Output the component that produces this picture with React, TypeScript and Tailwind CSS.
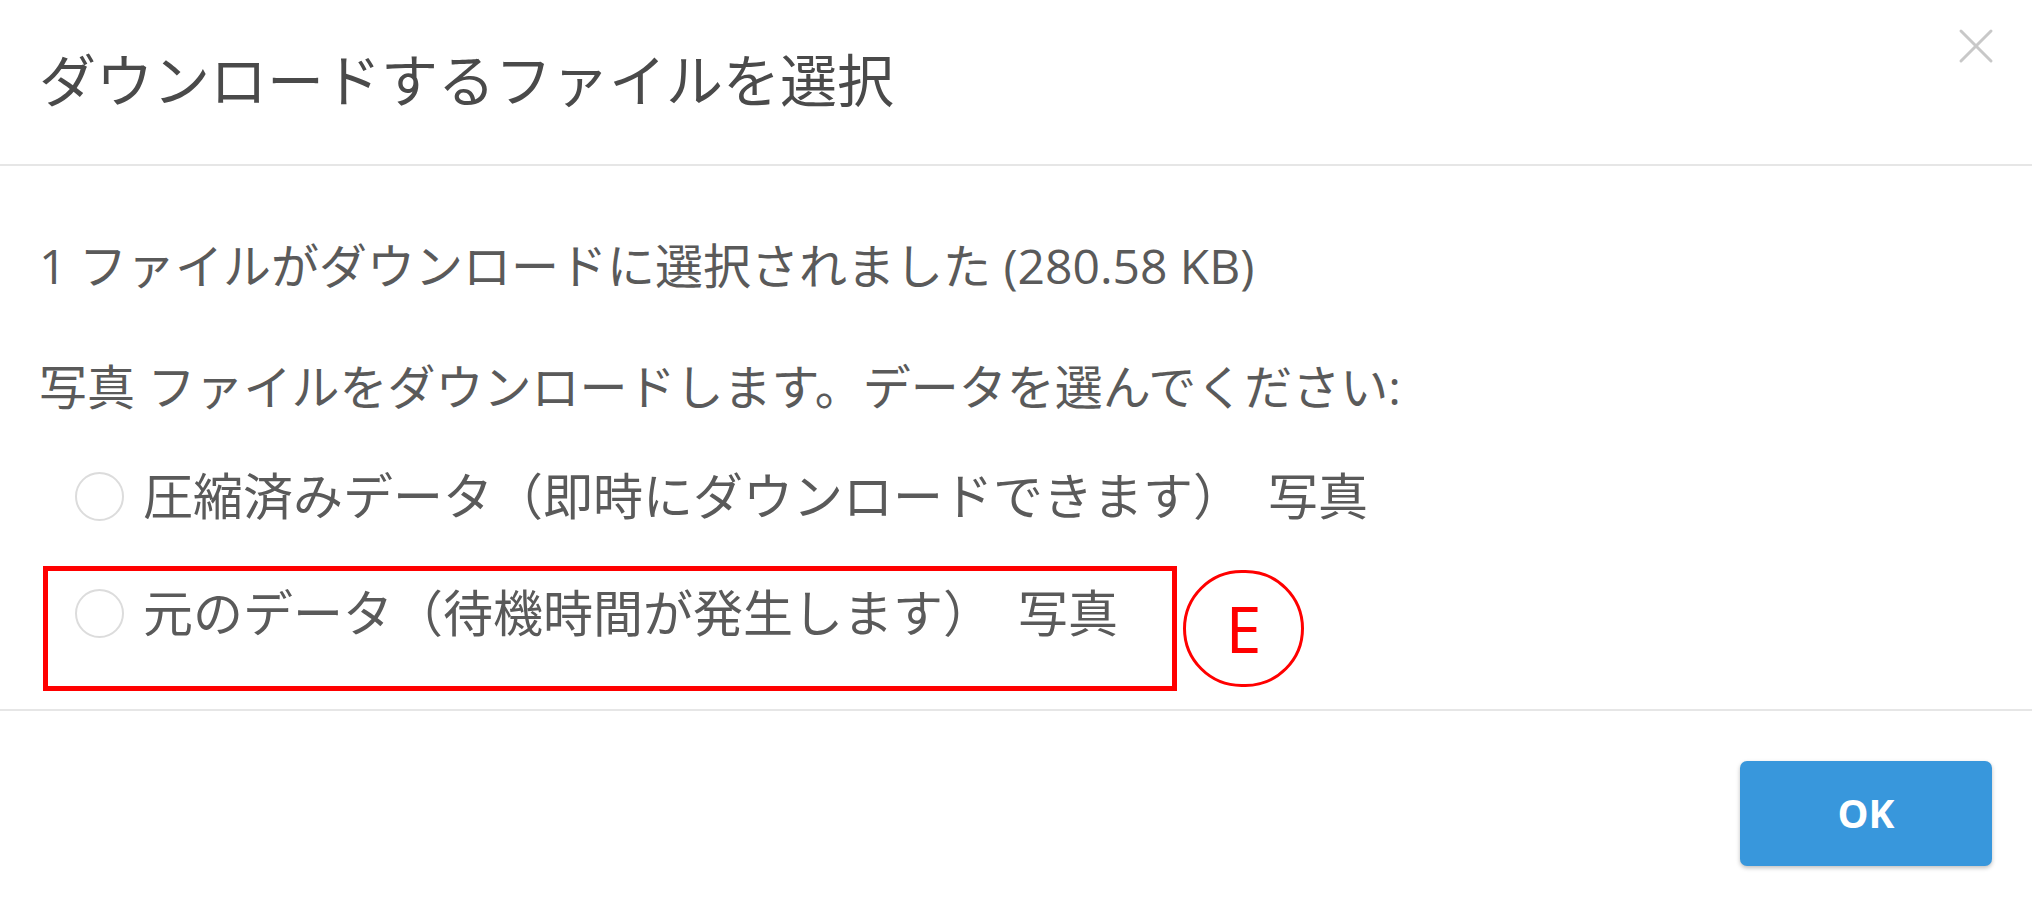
import { X } from "lucide-react"

const font = { fontFamily: '"Open Sans", "Noto Sans CJK JP", sans-serif' }

function Radio({ label }: { label: string }) {
  return (
    <label className="flex items-center h-[68px] pl-[36px] gap-[19px] text-[50px] cursor-pointer">
      <span className="w-[49px] h-[49px] rounded-full border-2 border-[#dcdcdc] bg-white shrink-0" />
      <span>{label}</span>
    </label>
  )
}

export default function App() {
  return (
    <div
      className="relative w-full h-[907px] bg-white text-[#5a5a5a] overflow-hidden"
      style={font}
    >
      {/* Header */}
      <div className="flex items-start justify-between h-[166px] border-b-2 border-[#e6e6e6]">
        <h2 className="mt-[46px] pl-[39px] text-[57px] leading-[68px] font-normal text-[#4a4a4a]">
          ダウンロードするファイルを選択
        </h2>
        <button className="mt-[16px] mr-[26px] text-[#c8c8c8]">
          <X className="w-[60px] h-[60px]" strokeWidth={1.2} />
        </button>
      </div>

      {/* Body */}
      <div className="px-[39px] pt-[66px] pb-[62px] text-[48px] leading-[68px]">
        <p>1 ファイルがダウンロードに選択されました (280.58 KB)</p>
        <p className="mt-[53px]">写真 ファイルをダウンロードします。データを選んでください:</p>
        <div className="mt-[41px]">
          <Radio label="圧縮済みデータ（即時にダウンロードできます）　写真" />
        </div>
        <div className="mt-[49px]">
          <Radio label="元のデータ（待機時間が発生します）　写真" />
        </div>
      </div>

      {/* Footer */}
      <div className="flex justify-end border-t-2 border-[#e6e6e6] pt-[50px] pr-[40px] pb-[39px]">
        <button className="w-[252px] h-[105px] rounded-[7px] bg-[#3897dc] text-white text-[39px] font-bold shadow-[0_2px_4px_rgba(0,0,0,0.25)]">
          OK
        </button>
      </div>

      {/* Annotation overlays */}
      <div className="absolute left-[43px] top-[566px] w-[1134px] h-[125px] border-[5px] border-[#ff0000]" />
      <div
        className="absolute left-[1183px] top-[570px] w-[121px] h-[117px] rounded-full border-[3px] border-[#ff0000] flex items-center justify-center text-[#ff0000] text-[64px] leading-none"
        style={{ fontFamily: '"Noto Sans", sans-serif' }}
      >
        E
      </div>
    </div>
  )
}
